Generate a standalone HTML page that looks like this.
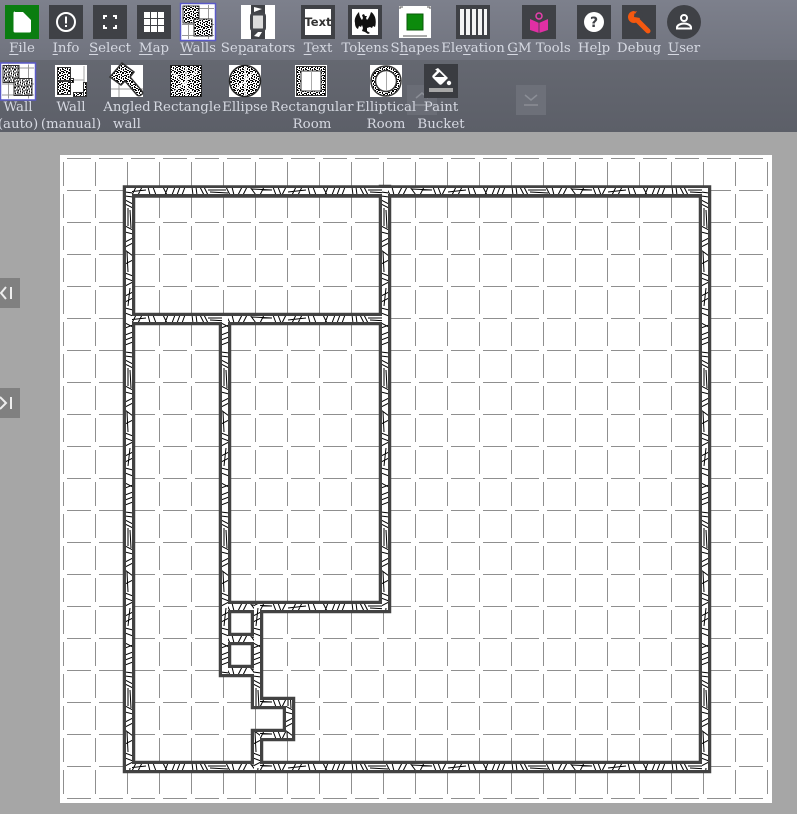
<!DOCTYPE html>
<html><head><meta charset="utf-8"><title>Map editor</title>
<style>
html,body{margin:0;padding:0;width:797px;height:814px;overflow:hidden;background:#a6a6a6}
#t1{position:absolute;left:0;top:0;width:797px;height:60px;background:linear-gradient(180deg,#7d808c,#70737e)}
#t2{position:absolute;left:0;top:60px;width:797px;height:72px;background:linear-gradient(180deg,#656871,#5c5f68)}
svg{position:absolute;left:0;top:0;display:block}
.l{position:absolute;transform:translateX(-50%);white-space:nowrap;font:13.33px/17px "DejaVu Serif","Liberation Serif",serif;color:#d6d9e2;text-align:center}
.l u{text-underline-offset:2px}
.b{position:absolute;left:0;width:20px;height:30px;background:#808080;color:#eee}
</style></head><body>
<div id="t1"></div><div id="t2"></div>

<svg width="797" height="814" viewBox="0 0 797 814">
<defs>
<pattern id="sp" width="9" height="9" patternUnits="userSpaceOnUse">
<rect width="9" height="9" fill="#fff"/>
<path fill="#000" d="M0 0h2v1H0zM3 0h1v1H3zM5 0h2v2H5zM8 1h1v1H8zM1 2h2v1H1zM4 2h1v2H4zM7 3h2v1H7zM0 3h1v2H0zM2 4h1v2H2zM5 4h2v1H5zM8 5h1v2H8zM0 6h1v1H0zM4 5h1v2H4zM6 6h1v2H6zM1 7h2v1H1zM3 8h2v1H3zM7 8h2v1H7zM0 8h1v1H0z"/>
</pattern>
<pattern id="hh" x="0" y="187" width="160" height="8" patternUnits="userSpaceOnUse">
<rect width="160" height="8" fill="#fff"/>
<path stroke="#000" stroke-width="1" fill="none" d="M3 0L7 8M5 8L8 0M12 8L15 0M17 8L20 0M22 8L25 0M32 0L33 8M36 0L37 8M40 0L44 8M44 0L48 8M48 3L66 3M50 5L68 6M66 0L70 8M74 8L72 0M78 8L82 0M83 8L87 0M96 8L90 0M92 2L112 3M100 8L104 0M113 0L116 8M118 0L121 8M122 8L126 0M128 5L146 3M132 8L136 0M138 8L142 0M148 0L150 8M153 0L156 8"/>
</pattern>
<pattern id="hv" x="125" y="0" width="8" height="160" patternUnits="userSpaceOnUse">
<rect width="8" height="160" fill="#fff"/>
<path stroke="#000" stroke-width="1" fill="none" d="M0 3L8 7M8 5L0 8M8 12L0 15M8 17L0 20M8 22L0 25M0 32L8 33M0 36L8 37M0 40L8 44M0 44L8 48M3 48L3 66M5 50L6 68M0 66L8 70M8 74L0 72M8 78L0 82M8 83L0 87M8 96L0 90M2 92L3 112M8 100L0 104M0 113L8 116M0 118L8 121M8 122L0 126M5 128L3 146M8 132L0 136M8 138L0 142M0 148L8 150M0 153L8 156"/>
</pattern>
<pattern id="gr" x="63" y="158" width="32" height="32" patternUnits="userSpaceOnUse">
<path stroke="#8f8f8f" stroke-width="1" fill="none" d="M.5 4V28M4 .5H28"/>
</pattern>
</defs>

<!-- canvas -->
<rect x="60" y="155" width="712" height="648" fill="#fff"/>
<rect x="63" y="158" width="705" height="641" fill="url(#gr)"/>

<!-- walls: dark casing -->
<g fill="none" stroke="#424242" stroke-width="12.500" stroke-linecap="square">
<path d="M129 191.500H705V767H129ZM385 191V607H225M129 319H385M225 319V671H257M225 639H257M257 607V703H289V735H257V767"/>
</g>
<!-- wall hatch -->
<g fill="none" stroke-width="6" stroke-linecap="square">
<path stroke="url(#hh)" d="M129 191H705M129 767H705M129 319H385M225 607H385M225 639H257M225 671H257M257 703H289M257 735H289"/>
<path stroke="url(#hv)" d="M129 191V767M705 191V767M385 191V607M225 319V671M257 607V703M289 703V735M257 735V767"/>
</g>

<!-- TOP ROW ICONS -->
<rect x="5" y="5" width="34" height="34" fill="#0a7d10"/>
<path fill="#fff" d="M15 12h8l8 8v11a1.500 1.500 0 0 1-1.500 1.500h-14.500a1.500 1.500 0 0 1-1.500-1.500v-18a1.500 1.500 0 0 1 1.500-1.500z"/>

<rect x="49" y="5" width="34" height="34" fill="#3f4146"/>
<circle cx="66" cy="22" r="9" fill="none" stroke="#fff" stroke-width="2"/>
<rect x="65" y="16.500" width="2" height="7" fill="#fff"/><rect x="65" y="25" width="2" height="2" fill="#fff"/>

<rect x="93" y="5" width="34" height="34" fill="#3f4146"/>
<path fill="none" stroke="#fff" stroke-width="2" d="M107 16H104V19M113 16H116V19M107 28H104V25M113 28H116V25"/>

<rect x="137" y="5" width="34" height="34" fill="#3f4146"/>
<path fill="#fff" d="M144 12h6v6h-6zM151 12h6v6h-6zM158 12h6v6h-6zM144 19h6v6h-6zM151 19h6v6h-6zM158 19h6v6h-6zM144 26h6v6h-6zM151 26h6v6h-6zM158 26h6v6h-6z"/>

<!-- Walls -->
<g id="wicon">
<rect x="180.500" y="3.500" width="35" height="37" fill="#fff" stroke="#5a5ac8" stroke-width="1.500"/>
<path stroke="#999" fill="none" d="M182 8.500h32M182 24.500h32M182 35.500h32M188.500 5v34M208.500 5v34"/>
<rect x="183" y="6" width="16" height="17" fill="url(#sp)" stroke="#333"/>
<rect x="194" y="19" width="18" height="17" fill="url(#sp)" stroke="#333"/>
</g>

<!-- Separators -->
<rect x="241" y="5" width="34" height="34" fill="#fff"/>
<path fill="#3f4146" d="M251 5h14v9h-14zM251 30h14v9h-14z"/>
<path fill="#fff" d="M254 7l8 2-8 3zM254 36l4-4 4 0-3 5z"/>
<rect x="251.500" y="14" width="13" height="16" rx="2" fill="#dcdcdc" stroke="#45474c" stroke-width="3"/>

<!-- Text -->
<rect x="301" y="5" width="34" height="34" fill="#3f4146"/>
<rect x="305" y="9" width="26" height="26" fill="#fff"/>
<text x="318" y="26" text-anchor="middle" font-family="DejaVu Sans,sans-serif" font-weight="bold" font-size="11.500" fill="#333">Text</text>

<!-- Tokens -->
<rect x="348" y="5" width="34" height="34" fill="#3f4146"/>
<rect x="352" y="9" width="26" height="26" fill="#fff"/>
<path fill="#111" d="M359 12c-3 3-5 7-4 11 0 3 1 5 3 6l1-3 2 1 1-2 1 3-1 3 3 1 3 2 2-1-3-2 0-3 3-1 2 1 1-2 2 1c1-3 1-7 0-10-1-2-2-4-4-5-1 3-2 6-4 8l-1-2 1-2h-2l-1-2-2 1 1 3-1 2c-2-2-3-6-3-9z"/>

<!-- Shapes -->
<rect x="399" y="6" width="32" height="32" fill="#fff"/>
<path stroke="#555" fill="none" d="M403 36h24M400 9V7h3M427 7h3v2"/>
<rect x="407" y="14" width="16" height="16" fill="#0c8a0c" stroke="#0a5a0a"/>

<!-- Elevation -->
<rect x="456" y="5" width="34" height="34" fill="#3f4146"/>
<path fill="#f4f4f4" d="M460 9h4v26h-4zM466 9h4v26h-4zM472 9h4v26h-4zM478 9h4v26h-4zM484 9h3v26h-3z"/>

<!-- GM Tools -->
<rect x="522" y="5" width="34" height="34" fill="#3f4146"/>
<circle cx="539" cy="16" r="3" fill="none" stroke="#e83fae" stroke-width="1.500"/>
<path fill="#e02fa4" d="M530 19l9 4 9-4v11l-9 3-9-3z"/>
<path stroke="#3f4146" stroke-width=".8" fill="none" d="M539 23v10"/>

<!-- Help -->
<rect x="577" y="5" width="34" height="34" fill="#3f4146"/>
<circle cx="594" cy="22" r="10" fill="#fff"/>
<text x="594" y="27" text-anchor="middle" font-family="DejaVu Sans,sans-serif" font-weight="bold" font-size="14" fill="#3f4146">?</text>

<!-- Debug -->
<rect x="622" y="5" width="34" height="34" fill="#3f4146"/>
<path stroke="#f4580f" stroke-width="5" stroke-linecap="round" d="M635 18L648 31"/>
<circle cx="634" cy="17" r="6" fill="#f4580f"/>
<path fill="#3f4146" d="M634 17l1-8 6 1 2 6-3 2z"/>
<path fill="#f4580f" d="M634 12l3-1-2 3z"/>

<!-- User -->
<circle cx="684" cy="22" r="17" fill="#3f4146"/>
<circle cx="684" cy="18" r="3" fill="none" stroke="#fff" stroke-width="2"/>
<path fill="none" stroke="#fff" stroke-width="2" d="M677 28.500v-1c0-2.500 4-4 7-4s7 1.500 7 4v1z"/>

<!-- SECOND ROW ICONS -->
<use href="#wicon" transform="translate(-180 59.500)"/>

<!-- Wall manual -->
<rect x="55" y="65" width="32" height="32" fill="#fff"/>
<path stroke="#aaa" fill="none" d="M60 80h24M84 66v30"/>
<g stroke="#333" fill="url(#sp)">
<rect x="57.500" y="67.500" width="13" height="13"/>
<rect x="57.500" y="81.500" width="13" height="13"/>
<rect x="70.500" y="78.500" width="3" height="4"/>
<rect x="73.500" y="92.500" width="10" height="4"/>
<rect x="83.500" y="82.500" width="3" height="14"/>
</g>

<!-- Angled -->
<rect x="111" y="65" width="32" height="32" fill="#fff"/>
<path stroke="#999" fill="none" d="M111 89h32M119 65v32"/>
<path d="M122 63l12 9-4 5 12 14c1 2 1 3-1 4-1 1-3 1-4 0l-12-14-4 4-11-8z" fill="url(#sp)" stroke="#333" stroke-width="1.500"/>

<!-- Rectangle -->
<rect x="170.500" y="65.500" width="31" height="31" fill="url(#sp)" stroke="#222"/>
<path stroke="#fff" stroke-width="1.500" fill="none" d="M174 92L198 70M186 66v30M172 72L194 94"/>

<!-- Ellipse -->
<rect x="229" y="65" width="32" height="32" fill="#fff"/>
<circle cx="245" cy="81" r="15.500" fill="url(#sp)" stroke="#222" stroke-width="1.500"/>
<path stroke="#fff" stroke-width="1.500" fill="none" d="M236 90L254 72M245 66v30"/>

<!-- Rect room -->
<rect x="295" y="65" width="32" height="32" fill="#fff"/>
<rect x="296.500" y="66.500" width="29" height="29" fill="url(#sp)" stroke="#333"/>
<rect x="301" y="71" width="20" height="20" fill="#fff" stroke="#333"/>
<path stroke="#aaa" fill="none" d="M311.500 71v20"/>

<!-- Ell room -->
<rect x="370" y="65" width="32" height="32" fill="#fff"/>
<circle cx="386" cy="81" r="15" fill="url(#sp)" stroke="#333" stroke-width="1.500"/>
<circle cx="386" cy="81" r="10.500" fill="#fff" stroke="#333" stroke-width="1.500"/>
<path stroke="#aaa" fill="none" d="M386.500 71v20"/>

<!-- up toggle behind -->
<rect x="407" y="85" width="30" height="30" fill="#6a6d76"/>
<path fill="none" stroke="#8b8e96" stroke-width="1.500" d="M416 98l6-5 6 5M415 105h15"/>

<!-- Paint bucket -->
<rect x="424" y="64" width="34" height="34" fill="#3a3c41"/>
<path fill="#fff" d="M436 69l2-1 10 10-6 6c-1 1-2 1-3 0l-6-6c-1-1-1-2 0-3l4-4-2-2z"/>
<path fill="#3a3c41" d="M434.500 77h10l-5-5z"/>
<circle cx="449" cy="83" r="2.200" fill="#fff"/>
<rect x="429" y="88" width="24" height="4" fill="#a8a8a8"/>

<!-- down toggle -->
<rect x="516" y="85" width="30" height="30" fill="#6d7079"/>
<path fill="none" stroke="#8b8e96" stroke-width="1.500" d="M525 95l6 5 6-5M524 105h14"/>
</svg>

<!-- labels row 1 -->
<div class="l" style="left:22px;top:40px"><u>F</u>ile</div>
<div class="l" style="left:66px;top:40px"><u>I</u>nfo</div>
<div class="l" style="left:110px;top:40px"><u>S</u>elect</div>
<div class="l" style="left:154px;top:40px"><u>M</u>ap</div>
<div class="l" style="left:198px;top:40px"><u>W</u>alls</div>
<div class="l" style="left:258px;top:40px">Se<u>p</u>arators</div>
<div class="l" style="left:318px;top:40px"><u>T</u>ext</div>
<div class="l" style="left:365px;top:40px">To<u>k</u>ens</div>
<div class="l" style="left:415px;top:40px">S<u>h</u>apes</div>
<div class="l" style="left:473px;top:40px">Ele<u>v</u>ation</div>
<div class="l" style="left:539px;top:40px"><u>G</u>M Tools</div>
<div class="l" style="left:594px;top:40px">He<u>l</u>p</div>
<div class="l" style="left:639px;top:40px">Debug</div>
<div class="l" style="left:684px;top:40px"><u>U</u>ser</div>

<!-- labels row 2 -->
<div class="l" style="left:18px;top:99px">Wall<br>(auto)</div>
<div class="l" style="left:71px;top:99px">Wall<br>(manual)</div>
<div class="l" style="left:127px;top:99px">Angled<br>wall</div>
<div class="l" style="left:187px;top:99px">Rectangle</div>
<div class="l" style="left:245px;top:99px">Ellipse</div>
<div class="l" style="left:312px;top:99px">Rectangular<br>Room</div>
<div class="l" style="left:386px;top:99px">Elliptical<br>Room</div>
<div class="l" style="left:441px;top:99px">Paint<br>Bucket</div>

<!-- side buttons -->
<div class="b" style="top:278px"><svg width="20" height="30"><path fill="none" stroke="#eee" stroke-width="2" d="M6 9L1 15l5 6M11 9v12"/></svg></div>
<div class="b" style="top:388px"><svg width="20" height="30"><path fill="none" stroke="#eee" stroke-width="2" d="M0 9l6 6-6 6M11 9v12"/></svg></div>
</body></html>
